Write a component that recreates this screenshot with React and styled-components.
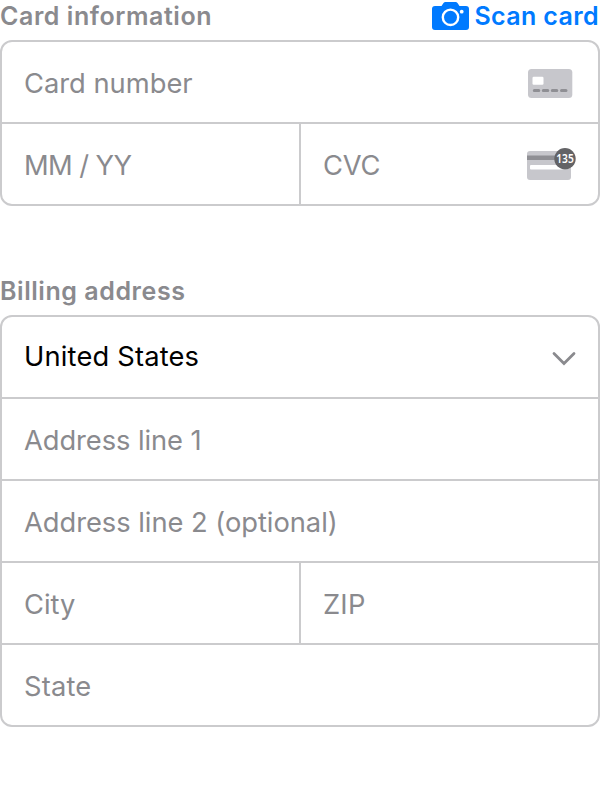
import React from 'react';
import styled, { createGlobalStyle } from 'styled-components';

const GlobalStyle = createGlobalStyle`
  * { box-sizing: border-box; }
  body { margin: 0; background: #fff; font-family: Inter, "Liberation Sans", sans-serif; }
`;
const Page = styled.main`
  width: 600px;
  height: 800px;
  overflow: hidden;
`;
const Header = styled.header`
  display: flex;
  justify-content: space-between;
  height: 40px;
  margin-top: ${p => p.$gap || 0}px;
`;
const Title = styled.h2`
  margin: 0;
  font-size: 25px;
  line-height: 32px;
  font-weight: 600;
  color: #8a8a8e;
  letter-spacing: 0.56px;
  white-space: nowrap;
`;
const Scan = styled.button`
  display: flex;
  gap: 5px;
  height: 32px;
  padding: 0 1px 0 0;
  border: 0;
  background: none;
  color: #007aff;
  font: 600 25px/32px Inter, sans-serif;
  letter-spacing: 0.38px;
  white-space: nowrap;
`;
const Group = styled.section`
  border: 2px solid #cbcbcd;
  border-radius: 12px;
  overflow: hidden;
`;
const Row = styled.div`
  display: flex;
  height: 82px;
  &:first-child { height: 80px; }
  & + & { border-top: 2px solid #cbcbcd; }
`;
const Field = styled.div`
  flex: 1;
  display: flex;
  justify-content: space-between;
  align-items: center;
  padding: 0 22px;
  color: ${p => p.$filled ? '#000' : '#8a8a8e'};
  & + & { border-left: 2px solid #cbcbcd; }
`;
const Label = styled.span`
  font-size: 27.3px;
  line-height: 34px;
  letter-spacing: ${p => p.$spacing || 0}px;
  padding-top: ${p => p.$filled ? 0 : 4}px;
  white-space: nowrap;
`;
const Icon = styled.svg`
  display: block;
  flex: none;
  overflow: visible;
`;

const CameraIcon = () => (
  <Icon width="37" height="32" viewBox="0 0 37 32">
    <path fill="#007aff" d="M3 6h6.500l2-3q.7-1 2-1h10q1.300 0 2 1l2 3H34q3 0 3 3v18q0 3-3 3H3q-3 0-3-3V9q0-3 3-3Z" />
    <circle cx="18.500" cy="17.300" r="7.700" fill="none" stroke="#fff" strokeWidth="2.400" />
    <circle cx="29.700" cy="11.700" r="1.900" fill="#fff" />
  </Icon>
);
const CardIcon = () => (
  <Icon width="50" height="30" viewBox="526 67 50 30">
    <rect x="528" y="69" width="44.300" height="29" rx="3.500" fill="#c7c7cc" />
    <rect x="532.500" y="76.800" width="11" height="8" rx="1.200" fill="#fff" />
    <path d="M534.300 90.500h4.500M543.300 90.500h4.500M552.300 90.500h4.500M561.500 90.500h4.500" stroke="#8f8f94" strokeWidth="3" strokeLinecap="round" />
  </Icon>
);
const CvcIcon = () => (
  <Icon width="50" height="34" viewBox="526 147 50 34">
    <rect x="527" y="151" width="44" height="29" rx="3" fill="#c7c7cc" />
    <path fill="#8f8f94" d="M527 155.500h44v4.500h-44z" />
    <rect x="530" y="165" width="37" height="4.500" rx="1" fill="#fff" />
    <circle cx="565" cy="158.700" r="10.700" fill="#636366" />
    <text x="565" y="163" textAnchor="middle" fill="#fff" fontFamily="Noto Sans, sans-serif" fontSize="12" fontWeight="600" textLength="17.500" lengthAdjust="spacingAndGlyphs">135</text>
  </Icon>
);
const ChevronIcon = () => (
  <Icon width="26" height="34" viewBox="550 340 26 34">
    <path d="m554 353.500 10 10 10-10" fill="none" stroke="#8a8a8e" strokeWidth="2.800" strokeLinecap="round" />
  </Icon>
);

export default function App() {
  return (
    <Page>
      <GlobalStyle />
      <Header><Title>Card information</Title><Scan><CameraIcon />Scan card</Scan></Header>
      <Group>
        <Row><Field><Label>Card number</Label><CardIcon /></Field></Row>
        <Row>
          <Field><Label $spacing={-0.6}>MM / YY</Label></Field>
          <Field><Label $spacing={-0.2}>CVC</Label><CvcIcon /></Field>
        </Row>
      </Group>
      <Header $gap={69}><Title>Billing address</Title></Header>
      <Group>
        <Row><Field $filled><Label $filled $spacing={0.17}>United States</Label><ChevronIcon /></Field></Row>
        <Row><Field><Label $spacing={-0.07}>Address line 1</Label></Field></Row>
        <Row><Field><Label $spacing={-0.03}>Address line 2 (optional)</Label></Field></Row>
        <Row><Field><Label>City</Label></Field><Field><Label $spacing={0.2}>ZIP</Label></Field></Row>
        <Row><Field><Label $spacing={0.2}>State</Label></Field></Row>
      </Group>
    </Page>
  );
}
